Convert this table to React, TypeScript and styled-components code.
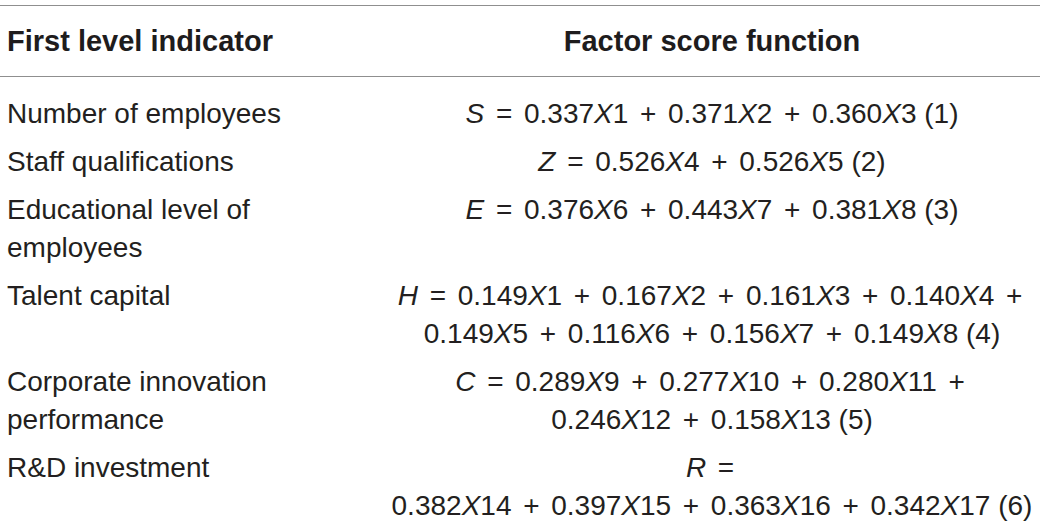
import React from "react";
import styled, { createGlobalStyle } from "styled-components";

const GlobalStyle = createGlobalStyle`
  html, body {
    margin: 0;
    padding: 0;
    background: #ffffff;
  }
  body {
    font-family: "Liberation Sans", Arial, Helvetica, sans-serif;
    color: #231f20;
  }
`;

const Page = styled.div`
  width: 1040px;
  height: 528px;
  overflow: hidden;
  padding-top: 5px;
  box-sizing: border-box;
`;

const Table = styled.table`
  width: 1040px;
  border-collapse: collapse;
  table-layout: fixed;
  font-family: "Liberation Sans", Arial, Helvetica, sans-serif;
  font-size: 28px;
  line-height: 38px;
  color: #231f20;
`;

const HeadRow = styled.tr`
  border-top: 1px solid #8f8f8f;
  border-bottom: 1px solid #8f8f8f;
`;

const HeadCell = styled.th<{ $align?: "left" | "center" }>`
  font-weight: 700;
  font-size: 29px;
  text-align: ${(p) => p.$align ?? "left"};
  padding: 16px 7px 16px 7px;
  height: 38px;
  color: #1e1c1d;
`;

const Row = styled.tr`
  &:first-child td {
    padding-top: 18px;
  }
`;

const Cell = styled.td<{ $align?: "left" | "center" }>`
  text-align: ${(p) => p.$align ?? "left"};
  vertical-align: top;
  padding: 5px 7px;
  font-weight: 400;
`;

const EqLine = styled.span`
  display: block;
  white-space: nowrap;
`;

const Var = styled.i`
  font-style: italic;
`;

const Op = styled.span`
  margin: 0 0.14em;
`;

function renderTerm(t: string, key: number) {
  if (t === "=" || t === "+") {
    return <Op key={key}>{t}</Op>;
  }
  if (/^[A-Z]$/.test(t)) {
    return <Var key={key}>{t}</Var>;
  }
  const m = t.match(/^([0-9.]+)X([0-9]+)$/);
  if (m) {
    return (
      <span key={key}>
        {m[1]}
        <Var>X</Var>
        {m[2]}
      </span>
    );
  }
  return <span key={key}>{t}</span>;
}

function Equation({ lines }: { lines: string[] }) {
  return (
    <>
      {lines.map((line, i) => {
        const tokens = line.split(" ");
        const parts: React.ReactNode[] = [];
        tokens.forEach((t, j) => {
          if (j > 0) parts.push(" ");
          parts.push(renderTerm(t, j));
        });
        return <EqLine key={i}>{parts}</EqLine>;
      })}
    </>
  );
}

const rows: { label: string; eq: string[] }[] = [
  { label: "Number of employees", eq: ["S = 0.337X1 + 0.371X2 + 0.360X3 (1)"] },
  { label: "Staff qualifications", eq: ["Z = 0.526X4 + 0.526X5 (2)"] },
  {
    label: "Educational level of employees",
    eq: ["E = 0.376X6 + 0.443X7 + 0.381X8 (3)"],
  },
  {
    label: "Talent capital",
    eq: [
      "H = 0.149X1 + 0.167X2 + 0.161X3 + 0.140X4 +",
      "0.149X5 + 0.116X6 + 0.156X7 + 0.149X8 (4)",
    ],
  },
  {
    label: "Corporate innovation performance",
    eq: ["C = 0.289X9 + 0.277X10 + 0.280X11 +", "0.246X12 + 0.158X13 (5)"],
  },
  {
    label: "R&D investment",
    eq: ["R =", "0.382X14 + 0.397X15 + 0.363X16 + 0.342X17 (6)"],
  },
];

export default function App() {
  return (
    <>
      <GlobalStyle />
      <Page>
        <Table>
          <colgroup>
            <col style={{ width: "384px" }} />
            <col />
          </colgroup>
          <thead>
            <HeadRow>
              <HeadCell $align="left">First level indicator</HeadCell>
              <HeadCell $align="center">Factor score function</HeadCell>
            </HeadRow>
          </thead>
          <tbody>
            {rows.map((r) => (
              <Row key={r.label}>
                <Cell $align="left">{r.label}</Cell>
                <Cell $align="center">
                  <Equation lines={r.eq} />
                </Cell>
              </Row>
            ))}
          </tbody>
        </Table>
      </Page>
    </>
  );
}
